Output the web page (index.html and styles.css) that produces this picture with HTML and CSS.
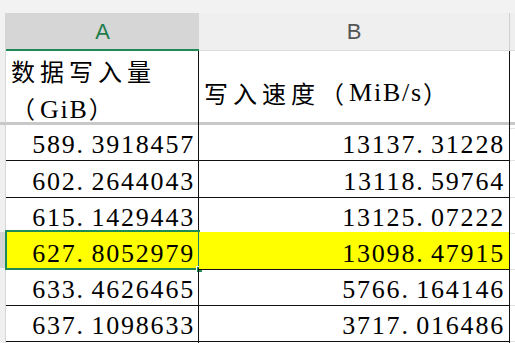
FILE: index.html
```html
<!DOCTYPE html>
<html>
<head>
<meta charset="utf-8">
<link rel="stylesheet" href="styles.css">
</head>
<body>
<div class="sheet">
  <div class="topband"></div>
  <div class="row colhead">
    <div class="strip"></div>
    <div class="hcell ha">A</div>
    <div class="hcell hb">B</div>
    <div class="hcell hc"></div>
  </div>
  <div class="row title">
    <div class="strip"></div>
    <div class="cell ta"><span class="cjk">数据写入量</span><br><span class="cjk par">（</span><span class="lat">GiB</span><span class="cjk par">）</span></div>
    <div class="cell tb"><span class="cjk">写入速度（</span><span class="lat">MiB/s</span><span class="cjk par">）</span></div>
    <div class="cell c"></div>
  </div>
  <div class="freeze"></div>
  <div class="row data first">
    <div class="strip"></div>
    <div class="cell a num">589<span class="dot">.</span>3918457</div>
    <div class="cell b num">13137<span class="dot">.</span>31228</div>
    <div class="cell c"></div>
  </div>
  <div class="row data">
    <div class="strip"></div>
    <div class="cell a num">602<span class="dot">.</span>2644043</div>
    <div class="cell b num">13118<span class="dot">.</span>59764</div>
    <div class="cell c"></div>
  </div>
  <div class="row data">
    <div class="strip"></div>
    <div class="cell a num">615<span class="dot">.</span>1429443</div>
    <div class="cell b num">13125<span class="dot">.</span>07222</div>
    <div class="cell c"></div>
  </div>
  <div class="row data hl">
    <div class="strip sel"></div>
    <div class="cell a num">627<span class="dot">.</span>8052979<div class="selbox"><div class="handle"></div></div></div>
    <div class="cell b num">13098<span class="dot">.</span>47915</div>
    <div class="cell c"></div>
  </div>
  <div class="row data">
    <div class="strip"></div>
    <div class="cell a num">633<span class="dot">.</span>4626465</div>
    <div class="cell b num">5766<span class="dot">.</span>164146</div>
    <div class="cell c"></div>
  </div>
  <div class="row data">
    <div class="strip"></div>
    <div class="cell a num">637<span class="dot">.</span>1098633</div>
    <div class="cell b num">3717<span class="dot">.</span>016486</div>
    <div class="cell c"></div>
  </div>
  <div class="row data">
    <div class="strip"></div>
    <div class="cell a num"></div>
    <div class="cell b num"></div>
    <div class="cell c"></div>
  </div>
</div>
</body>
</html>
```

FILE: styles.css
```css
html, body {
  margin: 0;
  padding: 0;
  background: #ffffff;
  overflow: hidden;
}

.sheet {
  width: 515px;
  height: 343px;
  overflow: hidden;
  display: flex;
  flex-direction: column;
}

.topband {
  height: 13px;
  flex: none;
  background: #f2f2f2;
}

.row {
  display: grid;
  grid-template-columns: 6px 193px 311px 1fr;
  flex: none;
}

.strip {
  background: #f0f0f0;
  border-right: 1px solid #d6d6d6;
}

.strip.sel {
  background: #d4d4d4;
}

/* column headers */
.colhead {
  height: 38px;
}

.colhead .strip {
  background: #f2f2f2;
}

.hcell {
  display: flex;
  align-items: center;
  justify-content: center;
  font-family: "Liberation Sans", Arial, sans-serif;
  font-size: 22px;
  box-sizing: border-box;
}

.ha {
  background: #d6d6d6;
  color: #1e7d4c;
  border-bottom: 2px solid #1f8a55;
  padding-top: 1px;
}

.hb {
  background: #efefef;
  color: #555555;
  border-right: 1px solid #d0d0d0;
  border-bottom: 1px solid #dcdcdc;
  padding-top: 1px;
}

.hc {
  background: #efefef;
  border-bottom: 1px solid #dcdcdc;
}

/* body cells */
.cell {
  box-sizing: border-box;
  border-bottom: 1px solid #111111;
  color: #000000;
  white-space: nowrap;
  position: relative;
}

.a, .ta, .tb, .b {
  border-right: 1px solid #111111;
}

.ta, .tb {
  border-bottom: none;
}

.c {
  border-bottom: 1px solid #e2e2e2;
}

.title {
  height: 71px;
}

.cjk {
  font-family: "Noto Sans CJK SC", "Noto Sans", sans-serif;
  font-size: 24px;
  letter-spacing: 5px;
}

.lat {
  font-family: "Liberation Serif", serif;
  font-size: 26px;
  letter-spacing: 1.8px;
}

.ta {
  padding: 4px 0 0 5px;
  line-height: 32px;
}

.tb {
  display: flex;
  align-items: center;
  padding: 6px 0 0 5px;
  line-height: 32px;
}

.freeze {
  height: 3px;
  flex: none;
  background: #c8c8c8;
}

.data {
  height: 36px;
}

.data.first {
  height: 35px;
}

.num {
  font-family: "Liberation Serif", serif;
  font-size: 26px;
  letter-spacing: 1.8px;
  text-align: right;
  line-height: 31px;
  padding-top: 6px;
}

.first .num {
  padding-top: 4px;
}

.a.num {
  padding-right: 3px;
}

.b.num {
  padding-right: 4px;
}

.dot {
  margin-right: 6.5px;
}

.hl .a, .hl .b {
  background: #ffff00;
}

.selbox {
  position: absolute;
  left: -1px;
  top: -2px;
  right: -2px;
  bottom: -1px;
  border: 2px solid #1f8a55;
  pointer-events: none;
}

.handle {
  position: absolute;
  right: -5px;
  bottom: -5px;
  width: 5px;
  height: 5px;
  background: #1f8a55;
  border: 1px solid #ffffff;
}
```
